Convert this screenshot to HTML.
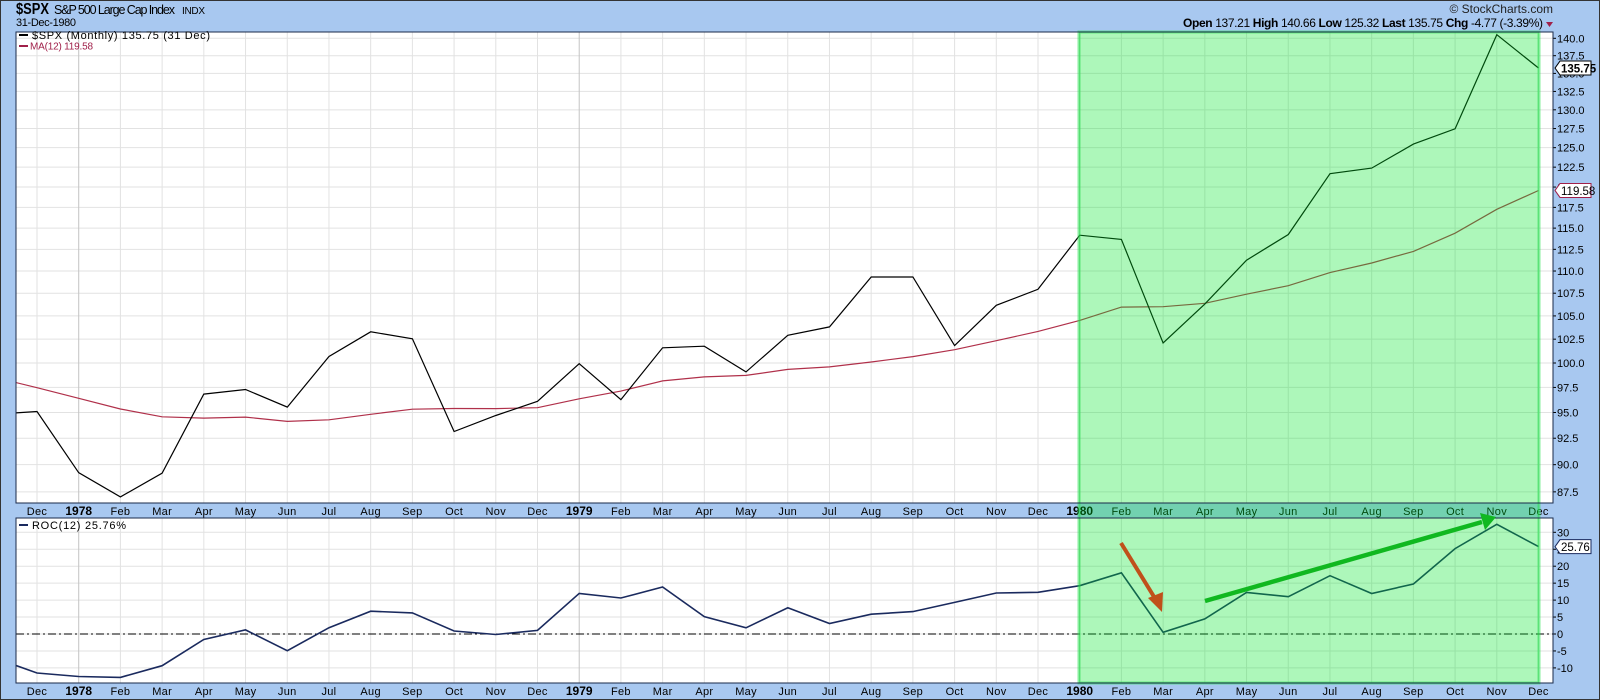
<!DOCTYPE html>
<html><head><meta charset="utf-8"><style>
html,body{margin:0;padding:0;background:#a8c8f0;}
svg{display:block;}
text{font-family:"Liberation Sans",Arial,sans-serif;}
</style></head><body>
<svg id="s" width="1600" height="700" xmlns="http://www.w3.org/2000/svg"></svg>
<script>
const S=document.getElementById('s');
let h='';
const data=[102.10,107.46,
102.03,99.82,98.42,98.44,96.12,100.48,98.85,96.77,96.53,92.34,94.83,95.10,
89.25,87.04,89.21,96.83,97.29,95.53,100.68,103.29,102.54,93.15,94.70,96.11,
99.93,96.28,101.59,101.76,99.08,102.91,103.81,109.32,109.32,101.82,106.16,107.94,
114.16,113.66,102.09,106.29,111.24,114.24,121.67,122.38,125.46,127.47,140.52,135.76];
const step=(1538.5-37)/36;
const X=j=>37+(j-13)*step;
const Y=v=>38.3+965*Math.log(140/v);
const RY=v=>634-3.39*v;
const L=16,R=1553,T=32,MB=503,RT=518,RB=683;
h+=`<rect x="${L}" y="${T}" width="${R-L}" height="${MB-T}" fill="#fff"/>`;
h+=`<rect x="${L}" y="${RT}" width="${R-L}" height="${RB-RT}" fill="#fff"/>`;
for(let v=87.5;v<=140.01;v+=2.5){const y=Y(v);h+=`<line x1="${L}" x2="${R}" y1="${y}" y2="${y}" stroke="#e2e2e2"/>`;
h+=`<line x1="${R}" x2="${R+3}" y1="${y}" y2="${y}" stroke="#000"/><text x="${R+4}" y="${y+4}" font-size="11">${v.toFixed(1)}</text>`;}
for(let v=-10;v<=30;v+=5){const y=RY(v);h+=`<line x1="${L}" x2="${R}" y1="${y}" y2="${y}" stroke="#e2e2e2"/>`;
h+=`<line x1="${R}" x2="${R+3}" y1="${y}" y2="${y}" stroke="#000"/><text x="${R+4}" y="${y+4}" font-size="11">${v}</text>`;}
const mon=['Jan','Feb','Mar','Apr','May','Jun','Jul','Aug','Sep','Oct','Nov','Dec'];
for(let j=13;j<=49;j++){const x=X(j);const m=(j-2+12)%12;const yr=m==0;
 const c=yr?'#c4c4c4':'#e2e2e2';
 h+=`<line x1="${x}" x2="${x}" y1="${T}" y2="${MB}" stroke="${c}"/><line x1="${x}" x2="${x}" y1="${RT}" y2="${RB}" stroke="${c}"/>`;
 const lab=yr?(1977+Math.floor((j-2)/12)):mon[m];
 const st=yr?'font-weight="bold" font-size="12"':'font-size="11" font-family="DejaVu Sans" letter-spacing="0.3"';
 h+=`<text x="${x}" y="515" text-anchor="middle" ${st}>${lab}</text><text x="${x}" y="695" text-anchor="middle" ${st}>${lab}</text>`;}
h+=`<line x1="${L}" x2="${R}" y1="634" y2="634" stroke="#000" stroke-dasharray="8,3,2,3"/>`;
h+=`<clipPath id="c1"><rect x="${L}" y="${T}" width="${R-L}" height="${MB-T}"/></clipPath><clipPath id="c2"><rect x="${L}" y="${RT}" width="${R-L}" height="${RB-RT}"/></clipPath>`;
let p='',m='',r='';
for(let j=12;j<data.length;j++){const x=X(j);
 p+=(j==12?'M':'L')+x.toFixed(1)+','+Y(data[j]).toFixed(1);
 let s=0;for(let k=j-11;k<=j;k++)s+=data[k];
 m+=(j==12?'M':'L')+x.toFixed(1)+','+Y(s/12).toFixed(1);
 r+=(j==12?'M':'L')+x.toFixed(1)+','+RY((data[j]/data[j-12]-1)*100).toFixed(1);}
h+=`<g clip-path="url(#c1)"><path d="${m}" fill="none" stroke="#b0304a" stroke-width="1.2"/><path d="${p}" fill="none" stroke="#000" stroke-width="1.2"/></g>`;
h+=`<g clip-path="url(#c2)"><path d="${r}" fill="none" stroke="#1a2a5e" stroke-width="1.6"/></g>`;
h+=`<rect x="1079" y="${T}" width="${1539-1079}" height="${RB-T}" fill="rgb(0,230,40)" fill-opacity="0.32" stroke="rgb(40,225,80)" stroke-opacity="0.55" stroke-width="3"/>`;
h+=`<rect x="${L}" y="${T}" width="${R-L}" height="${MB-T}" fill="none" stroke="#1a2a4a"/>`;
h+=`<rect x="${L}" y="${RT}" width="${R-L}" height="${RB-RT}" fill="none" stroke="#1a2a4a"/>`;
h+=`<line x1="1121" y1="543" x2="1156" y2="600" stroke="#c0501a" stroke-width="4"/><polygon points="1162,612 1148,598 1163,592" fill="#c0501a"/>`;
h+=`<line x1="1205" y1="601" x2="1482" y2="522" stroke="#10b820" stroke-width="4.5"/><polygon points="1496,517 1480,513 1485,530" fill="#10b820"/>`;
function tag(y,t,c,b){h+=`<polygon points="${R+2},${y} ${R+7},${y-7} ${R+38},${y-7} ${R+38},${y+7} ${R+7},${y+7}" fill="#fff" stroke="${c}"/><text x="${R+8}" y="${y+4.5}" font-size="11.5" ${b?'font-weight="bold"':''} fill="#000">${t}</text>`;}
tag(Y(135.75),'135.75','#000',1);tag(Y(119.58),'119.58','#a0204a',0);tag(RY(25.76),'25.76','#1a2a5e',0);
h+=`<text x="16" y="14" font-size="16" font-weight="bold" textLength="33" lengthAdjust="spacingAndGlyphs">$SPX</text><text x="54" y="14" font-size="12.5" textLength="121">S&amp;P 500 Large Cap Index</text><text x="182" y="14" font-size="10" textLength="23">INDX</text>`;
h+=`<text x="16" y="26" font-size="11" textLength="60">31-Dec-1980</text>`;
h+=`<line x1="19" x2="28" y1="35" y2="35" stroke="#000" stroke-width="2"/><text x="32" y="39" font-size="11" font-family="DejaVu Sans" textLength="178">$SPX (Monthly) 135.75 (31 Dec)</text>`;
h+=`<line x1="19" x2="28" y1="46" y2="46" stroke="#a0204a" stroke-width="2"/><text x="30" y="49.5" font-size="10" fill="#a0204a" textLength="63">MA(12) 119.58</text>`;
h+=`<line x1="19" x2="28" y1="525" y2="525" stroke="#1a2a5e" stroke-width="2"/><text x="32" y="529" font-size="11" font-family="DejaVu Sans" textLength="94">ROC(12) 25.76%</text>`;
h+=`<text x="1553" y="13" font-size="12" text-anchor="end" fill="#222">© StockCharts.com</text>`;
h+=`<text x="1183" y="27" font-size="12" textLength="360"><tspan font-weight="bold">Open</tspan> 137.21 <tspan font-weight="bold">High</tspan> 140.66 <tspan font-weight="bold">Low</tspan> 125.32 <tspan font-weight="bold">Last</tspan> 135.75 <tspan font-weight="bold">Chg</tspan> -4.77 (-3.39%)</text>`;
h+=`<polygon points="1546,22 1553,22 1549.5,27" fill="#a0204a"/>`;
h+=`<rect x="0.5" y="0.5" width="1599" height="699" fill="none" stroke="#333"/>`;
S.innerHTML=h;
</script>
</body></html>
